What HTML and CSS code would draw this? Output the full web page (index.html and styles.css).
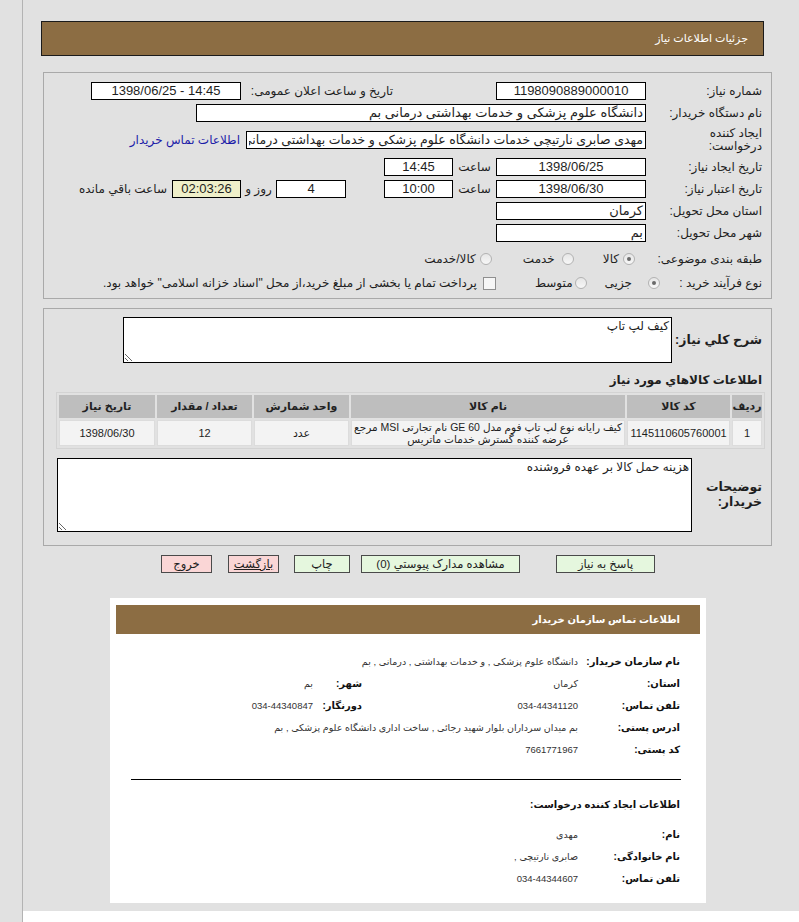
FILE: index.html
```html
<!DOCTYPE html>
<html lang="fa">
<head>
<meta charset="utf-8">
<title>جزئیات اطلاعات نیاز</title>
<link rel="stylesheet" href="styles.css">
</head>
<body>
<div class="page">
  <div class="title-bar" dir="rtl">جزئیات اطلاعات نیاز</div>

  <div class="box box-info" dir="rtl">
    <div class="row">
      <div class="lbl">شماره نیاز:</div>
      <div class="fld w150 c">1198090889000010</div>
      <div class="lbl2">تاریخ و ساعت اعلان عمومی:</div>
      <div class="fld w150 c" dir="ltr">1398/06/25 - 14:45</div>
    </div>
    <div class="row">
      <div class="lbl">نام دستگاه خریدار:</div>
      <div class="fld w450">دانشگاه علوم پزشکی و خدمات بهداشتی درمانی بم</div>
    </div>
    <div class="row tall">
      <div class="lbl two">ایجاد کننده<br>درخواست:</div>
      <div class="fld w400 creator"><span class="clip">مهدی صابری نارتیچی خدمات دانشگاه علوم پزشکی و خدمات بهداشتی درمانی بم</span></div>
      <a class="link" href="#">اطلاعات تماس خریدار</a>
    </div>
    <div class="row">
      <div class="lbl">تاریخ ایجاد نیاز:</div>
      <div class="fld w150 c">1398/06/25</div>
      <div class="unit">ساعت</div>
      <div class="fld w69 c">14:45</div>
    </div>
    <div class="row">
      <div class="lbl">تاریخ اعتبار نیاز:</div>
      <div class="fld w150 c">1398/06/30</div>
      <div class="unit">ساعت</div>
      <div class="fld w69 c">10:00</div>
      <div class="fld w70 c days">4</div>
      <div class="unit2">روز و</div>
      <div class="fld w69 c remain">02:03:26</div>
      <div class="remain-lbl">ساعت باقي مانده</div>
    </div>
    <div class="row">
      <div class="lbl">استان محل تحویل:</div>
      <div class="fld w150">کرمان</div>
    </div>
    <div class="row">
      <div class="lbl">شهر محل تحویل:</div>
      <div class="fld w150">بم</div>
    </div>
    <div class="row opts first-opt">
      <div class="lbl">طبقه بندی موضوعی:</div>
      <span class="radio on r8a"></span><span class="otext t8a">کالا</span>
      <span class="radio r8b"></span><span class="otext t8b">خدمت</span>
      <span class="radio r8c"></span><span class="otext t8c">کالا/خدمت</span>
    </div>
    <div class="row opts">
      <div class="lbl">نوع فرآیند خرید :</div>
      <span class="radio on r9a"></span><span class="otext t9a">جزیی</span>
      <span class="radio r9b"></span><span class="otext t9b">متوسط</span>
      <span class="check"></span><span class="otext t9c">پرداخت تمام یا بخشی از مبلغ خرید،از محل "اسناد خزانه اسلامی" خواهد بود.</span>
    </div>
  </div>

  <div class="box box-desc" dir="rtl">
    <div class="drow">
      <div class="dlbl">شرح کلي نیاز:</div>
      <textarea class="ta ta-short" readonly>کیف لپ تاپ</textarea>
    </div>
    <div class="sec-title">اطلاعات کالاهاي مورد نیاز</div>
    <table class="goods">
      <thead>
        <tr>
          <th class="col1">ردیف</th>
          <th class="col2">کد کالا</th>
          <th class="col3">نام کالا</th>
          <th class="col4">واحد شمارش</th>
          <th class="col5">تعداد / مقدار</th>
          <th class="col6">تاریخ نیاز</th>
        </tr>
      </thead>
      <tbody>
        <tr>
          <td>1</td>
          <td>1145110605760001</td>
          <td class="name">کیف رایانه نوع لپ تاپ فوم مدل GE 60 نام تجارتی MSI مرجع<br>عرضه کننده گسترش خدمات ماتریس</td>
          <td>عدد</td>
          <td>12</td>
          <td>1398/06/30</td>
        </tr>
      </tbody>
    </table>
    <div class="drow notes">
      <div class="dlbl">توضیحات<br>خریدار:</div>
      <textarea class="ta ta-long" readonly>هزینه حمل کالا بر عهده فروشنده</textarea>
    </div>
  </div>

  <div class="buttons" dir="rtl">
    <span class="btn green b1">پاسخ به نیاز</span>
    <span class="btn green b2">مشاهده مدارک پیوستي (0)</span>
    <span class="btn green b3">چاپ</span>
    <span class="btn pink b4">بازگشت</span>
    <span class="btn pink b5">خروج</span>
  </div>

  <div class="card" dir="rtl">
    <div class="card-head">اطلاعات تماس سازمان خریدار</div>
    <div class="crow first">
      <div class="clbl">نام سازمان خریدار:</div>
      <div class="cval wide">دانشگاه علوم پزشکی , و خدمات بهداشتی , درمانی , بم</div>
    </div>
    <div class="crow">
      <div class="clbl">استان:</div>
      <div class="cval">کرمان</div>
      <div class="clbl2">شهر:</div>
      <div class="cval2">بم</div>
    </div>
    <div class="crow">
      <div class="clbl">تلفن تماس:</div>
      <div class="cval">034-44341120</div>
      <div class="clbl2">دورنگار:</div>
      <div class="cval2">034-44340847</div>
    </div>
    <div class="crow">
      <div class="clbl">ادرس پستی:</div>
      <div class="cval wide">بم میدان سرداران بلوار شهید رجائی , ساخت اداری دانشگاه علوم پزشکی , بم</div>
    </div>
    <div class="crow">
      <div class="clbl">کد پستی:</div>
      <div class="cval">7661771967</div>
    </div>
    <div class="rule"></div>
    <div class="crow sub">
      <div class="sub-title">اطلاعات ایجاد کننده درخواست:</div>
    </div>
    <div class="crow after-sub">
      <div class="clbl">نام:</div>
      <div class="cval">مهدی</div>
    </div>
    <div class="crow">
      <div class="clbl">نام خانوادگی:</div>
      <div class="cval">صابری نارتیچی ,</div>
    </div>
    <div class="crow">
      <div class="clbl">تلفن تماس:</div>
      <div class="cval">034-44344607</div>
    </div>
  </div>

  <div class="page-end"></div>
</div>
</body>
</html>
```

FILE: styles.css
```css
* { box-sizing: border-box; }

html, body { height: 100%; }

body {
  margin: 0;
  background: #e1e1e1;
  font-family: "Liberation Sans", "DejaVu Sans", sans-serif;
  font-size: 12px;
  color: #1e1e1e;
  overflow: hidden;
}

.page {
  margin-left: 22px;
  border-left: 1px solid #b3b3b3;
  padding: 21px 0 0 18px;
  min-height: 100%;
}

.title-bar {
  width: 723px;
  height: 35px;
  background: #8c6d43;
  border: 1px solid #1b1b1b;
  color: #fff;
  font-size: 11px;
  padding-right: 15px;
  display: flex;
  align-items: center;
}

.box {
  margin-left: 2px;
  width: 729px;
  border: 1px solid #a9a9a9;
}

.box-info {
  margin-top: 16px;
  padding: 7px 0 3px 0;
}

.row {
  display: flex;
  align-items: center;
  height: 22px;
  white-space: nowrap;
}

.row.tall { height: 32px; }

.lbl {
  width: 125px;
  flex: none;
  padding-right: 9px;
}

.lbl.two { line-height: 13px; }

.lbl2 {
  width: 255px;
  flex: none;
  padding-right: 103px;
}

.fld {
  flex: none;
  height: 18px;
  border: 1px solid #000;
  background: #fff;
  padding: 0 2px;
  line-height: 16px;
  white-space: nowrap;
  overflow: hidden;
  font-size: 13px;
}

.creator {
  font-size: 12.5px;
  position: relative;
}

.clip {
  display: block;
  overflow: hidden;
  width: 100%;
}

.c { text-align: center; }
.w150 { width: 150px; }
.w450 { width: 450px; }
.w400 { width: 400px; }
.w69 { width: 69px; }
.w70 { width: 70px; }

.link {
  margin-right: 6px;
  color: #1c1ca8;
  text-decoration: none;
}

.unit {
  width: 43px;
  flex: none;
  text-align: center;
}

.days { margin-right: 38px; }

.unit2 {
  width: 35px;
  flex: none;
  text-align: center;
}

.remain { background: #efefc9; }

.remain-lbl { margin-right: 5px; }

.opts { height: 24px; }
.first-opt { margin-top: 3px; }

.radio {
  flex: none;
  width: 12px;
  height: 12px;
  border-radius: 50%;
  border: 1px solid #b2b2b2;
  background: linear-gradient(#e6e6e6, #f7f7f7);
  position: relative;
}

.radio.on::after {
  content: "";
  position: absolute;
  left: 3px;
  top: 3px;
  width: 4px;
  height: 4px;
  border-radius: 50%;
  background: #6a6a6a;
}

.check {
  flex: none;
  width: 13px;
  height: 13px;
  border: 1px solid #8f8f8f;
  background: #f6f6f6;
}

.otext { flex: none; }

.r8a { margin-right: 11px; }
.t8a { margin-right: 4px; }
.r8b { margin-right: 29px; }
.t8b { margin-right: 7px; }
.r8c { margin-right: 31px; }
.t8c { margin-right: 4px; }

.r9a { margin-right: -14px; }
.t9a { margin-right: 16px; }
.r9b { margin-right: 18px; }
.t9b { margin-right: 2px; }
.check { margin-right: 39px; }
.t9c { margin-right: 6px; }

/* description box */
.box-desc {
  margin-top: 9px;
  padding: 8px 0 13px 0;
}

.drow {
  display: flex;
  align-items: center;
}

.dlbl {
  flex: none;
  width: 99px;
  padding-right: 9px;
  font-weight: bold;
  font-size: 12.5px;
  line-height: 15px;
}

.ta {
  display: block;
  flex: none;
  border: 1px solid #000;
  background: #fff;
  font-family: "Liberation Sans", "DejaVu Sans", sans-serif;
  font-size: 12px;
  color: #1e1e1e;
  padding: 1px 2px;
  margin: 0;
  outline: none;
}

.ta-short { width: 549px; height: 46px; }

.notes { margin-top: 9px; }
.notes .dlbl { width: 79px; }
.ta-long { width: 635px; height: 74px; }

.sec-title {
  margin-top: 8px;
  height: 18px;
  line-height: 18px;
  padding-right: 9px;
  font-weight: bold;
  font-size: 12px;
}

.goods {
  margin-top: 3px;
  margin-right: 6px;
  width: 707px;
  height: 56px;
  border: 1px solid #d3d3d3;
  border-spacing: 2px;
  font-size: 11px;
  table-layout: fixed;
}

.goods th {
  background: #bebebe;
  height: 23px;
  font-weight: bold;
  color: #222;
  padding: 0;
  font-size: 11px;
}

.goods td {
  background: #f3f3f3;
  border: 1px solid #dcdcdc;
  height: 26px;
  text-align: center;
  padding: 0;
  line-height: 12px;
  font-size: 11px;
  white-space: nowrap;
}

.goods td.name { font-size: 10.5px; }

.col1 { width: 30px; }
.col2 { width: 103px; }
.col3 { width: 274px; }
.col4 { width: 95px; }
.col5 { width: 95px; }
.col6 { width: 96px; }

/* buttons */
.buttons {
  margin-top: 9px;
  margin-left: 2px;
  width: 729px;
  display: flex;
}

.btn {
  flex: none;
  display: block;
  height: 18px;
  border: 1px solid #4a4a4a;
  font-size: 11.5px;
  line-height: 16px;
  text-align: center;
  color: #1e1e1e;
}

.green { background: #e5f7de; }
.pink { background: #fad6d6; }

.b1 { width: 99px; margin-right: 117px; }
.b2 { width: 159px; margin-right: 36px; }
.b3 { width: 56px; margin-right: 11px; }
.b4 { width: 51px; margin-right: 15px; text-decoration: underline; }
.b5 { width: 51px; margin-right: 16px; }

/* contact card */
.card {
  margin-top: 25px;
  margin-left: 69px;
  width: 596px;
  background: #fff;
  padding: 7px 6px 14px 6px;
}

.card-head {
  height: 29px;
  background: #8c6d43;
  color: #fff;
  font-weight: bold;
  font-size: 10px;
  padding-right: 20px;
  display: flex;
  align-items: center;
}

.crow {
  display: flex;
  align-items: center;
  height: 22px;
  padding-right: 20px;
  white-space: nowrap;
}

.crow.first { margin-top: 16px; }

.clbl {
  flex: none;
  width: 102px;
  font-weight: bold;
  font-size: 10px;
  color: #111;
}

.cval {
  flex: none;
  width: 216px;
  font-size: 9.5px;
  color: #333;
}

.cval.wide { width: auto; }

.clbl2 {
  flex: none;
  width: 49px;
  font-weight: bold;
  font-size: 10px;
  color: #111;
}

.cval2 {
  flex: none;
  font-size: 9.5px;
  color: #333;
}

.rule {
  margin: 19px 19px 0 15px;
  height: 1px;
  background: #000;
}

.crow.sub { margin-top: 13px; }

.sub-title {
  font-weight: bold;
  font-size: 10px;
  color: #111;
}

.crow.after-sub { margin-top: 8px; }

.page-end {
  margin-top: 8px;
  margin-left: -18px;
  height: 40px;
  background: #fff;
}
```
